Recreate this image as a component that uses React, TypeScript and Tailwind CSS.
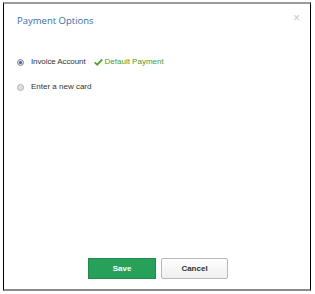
import React from "react";

export default function App() {
  return (
    <div className="w-[315px] h-[294px] bg-white relative" style={{ fontFamily: "'Liberation Sans', Arial, sans-serif" }}>
      <div className="absolute left-[3px] top-[2px] w-[308px] h-[289px] border-t-2 border-b-2 border-t-[#9a9a9a] border-b-[#8a8a8a] border-l border-r border-l-black border-r-black flex flex-col">
        <div className="flex items-center justify-between h-[34px] pl-[13px] pr-[10px] pt-[1px]">
          <span className="text-[9.5px] text-[#3a6ea5]" style={{ fontFamily: "'Open Sans', sans-serif" }}>Payment Options</span>
          <span className="text-[12px] text-[#c8c8c8] leading-none -mt-[7px]">×</span>
        </div>
        <div className="flex flex-col pl-[13px] pt-[18px] gap-[13px]">
          <div className="flex items-center h-[12px]">
            <span className="w-[7px] h-[7px] rounded-full border border-[#8a8a8a] bg-[#dcdcdc] flex items-center justify-center">
              <span className="w-[3px] h-[3px] rounded-full bg-[#2a6aa8]"></span>
            </span>
            <span className="ml-[7px] text-[8px] text-[#333] tracking-[-0.1px]">Invoice Account</span>
            <svg className="ml-[8px]" width="9" height="8" viewBox="0 0 12 10">
              <path d="M1 5.5 L4.3 8.5 L11 1.5" stroke="#5aa02c" strokeWidth="2.6" fill="none" />
            </svg>
            <span className="ml-[2px] text-[8px] text-[#4e9a2a]">Default Payment</span>
          </div>
          <div className="flex items-center h-[12px]">
            <span className="w-[7px] h-[7px] rounded-full border border-[#b0b0b0] bg-[#e0e0e0]"></span>
            <span className="ml-[7px] text-[8px] text-[#333]">Enter a new card</span>
          </div>
        </div>
        <div className="flex-1"></div>
        <div className="flex justify-center gap-[5px] pb-[10px] pl-[2px]">
          <button className="w-[68px] h-[21px] bg-[#27a05a] border border-[#1f8a4c] text-white text-[8px] font-bold">Save</button>
          <button className="w-[67px] h-[21px] bg-gradient-to-b from-white to-[#efefef] border border-[#b8b8b8] text-[#333] text-[8px] font-bold rounded-[2px]">Cancel</button>
        </div>
      </div>
    </div>
  );
}
